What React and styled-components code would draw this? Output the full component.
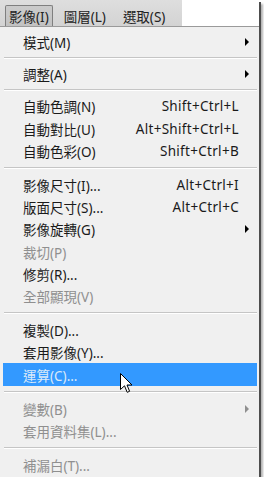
import React from 'react';
import styled, { createGlobalStyle } from 'styled-components';

const Global = createGlobalStyle`
  html, body { margin: 0; padding: 0; background: #ffffff; }
  body { font-family: "Noto Sans", "Noto Sans CJK TC", sans-serif; }
`;

const Frame = styled.div`
  position: relative;
  width: 259px;
  height: 477px;
  background: #f0f0f0;
  display: flex;
  flex-direction: column;
  box-shadow: 2px 2px 0 #4d4d4d, 4px 4px 2px rgba(0, 0, 0, 0.3);
`;

const Bar = styled.div`
  display: flex;
  height: 26px;
  background: #ffffff;
`;

const Tabs = styled.div`
  display: flex;
  align-items: flex-end;
  width: 177px;
  padding-left: 5px;
  gap: 5px;
  background: linear-gradient(#dedede, #d3d3d3);
`;

const Tab = styled.div`
  height: 21px;
  display: flex;
  align-items: center;
  padding: 0 ${p => (p.$active ? '3px' : '5px')};
  font-size: 13.5px;
  color: #222;
  box-sizing: border-box;
  border: 1px solid ${p => (p.$active ? '#7f7f7f' : 'transparent')};
  border-bottom: none;
  border-radius: 2px 2px 0 0;
  background: ${p => (p.$active ? 'linear-gradient(#cbcbcb, #c2c2c2)' : 'transparent')};
`;

const Menu = styled.div`
  flex: 1;
  border-top: 1px solid #9a9a9a;
  padding: 4px 2px 0 3px;
  display: flex;
  flex-direction: column;
`;

const Row = styled.div`
  height: 22.2px;
  flex: none;
  display: grid;
  grid-template-columns: 1fr auto 18px;
  align-items: center;
  padding-left: 20px;
  font-size: 13.5px;
  color: ${p => (p.$active ? '#dbe9f9' : p.$disabled ? '#8f8f8f' : '#1a1a1a')};
  background: ${p => (p.$active ? '#3399ff' : 'transparent')};
`;

const Label = styled.span`
  white-space: nowrap;
`;

const Shortcut = styled.span`
  white-space: nowrap;
  font-size: 13.5px;
  letter-spacing: 0.3px;
`;

const Arrow = styled.span`
  justify-self: start;
  margin-left: 6px;
  width: 0;
  height: 0;
  border-top: 4px solid transparent;
  border-bottom: 4px solid transparent;
  border-left: 4px solid ${p => (p.$disabled ? '#8f8f8f' : '#000')};
`;

const Sep = styled.div`
  height: ${p => p.$h}px;
  flex: none;
  display: flex;
  align-items: center;
  padding-left: 1px;
  &::after {
    content: '';
    flex: 1;
    height: 1px;
    background: #c5c5c5;
    border-bottom: 1px solid #ffffff;
  }
`;

const Cursor = styled.svg`
  position: absolute;
  left: 120px;
  top: 373px;
`;

const items = [
  { l: '模式(M)', sub: true },
  { sep: 10 },
  { l: '調整(A)', sub: true },
  { sep: 10 },
  { l: '自動色調(N)', k: 'Shift+Ctrl+L' },
  { l: '自動對比(U)', k: 'Alt+Shift+Ctrl+L' },
  { l: '自動色彩(O)', k: 'Shift+Ctrl+B' },
  { sep: 12 },
  { l: '影像尺寸(I)...', k: 'Alt+Ctrl+I' },
  { l: '版面尺寸(S)...', k: 'Alt+Ctrl+C' },
  { l: '影像旋轉(G)', sub: true },
  { l: '裁切(P)', dis: true },
  { l: '修剪(R)...' },
  { l: '全部顯現(V)', dis: true },
  { sep: 12 },
  { l: '複製(D)...' },
  { l: '套用影像(Y)...' },
  { l: '運算(C)...', active: true },
  { sep: 12 },
  { l: '變數(B)', sub: true, dis: true },
  { l: '套用資料集(L)...', dis: true },
  { sep: 12 },
  { l: '補漏白(T)...', dis: true },
];

export default function App() {
  return (
    <>
      <Global />
      <Frame>
        <Bar>
          <Tabs>
            <Tab $active>影像(I)</Tab>
            <Tab>圖層(L)</Tab>
            <Tab>選取(S)</Tab>
          </Tabs>
        </Bar>
        <Menu>
          {items.map((it, i) =>
            it.sep ? (
              <Sep key={i} $h={it.sep} />
            ) : (
              <Row key={i} $disabled={it.dis} $active={it.active}>
                <Label>{it.l}</Label>
                <Shortcut>{it.k || ''}</Shortcut>
                {it.sub ? <Arrow $disabled={it.dis} /> : <span />}
              </Row>
            )
          )}
        </Menu>
        <Cursor width="14" height="21" viewBox="0 0 14 21">
          <path
            d="M0.5 0.5 L0.5 16.5 L4.5 12.8 L7.2 19.3 L9.6 18.3 L7 12 L12 12 Z"
            fill="#ffffff"
            stroke="#000000"
            strokeWidth="1"
            strokeLinejoin="miter"
          />
        </Cursor>
      </Frame>
    </>
  );
}
